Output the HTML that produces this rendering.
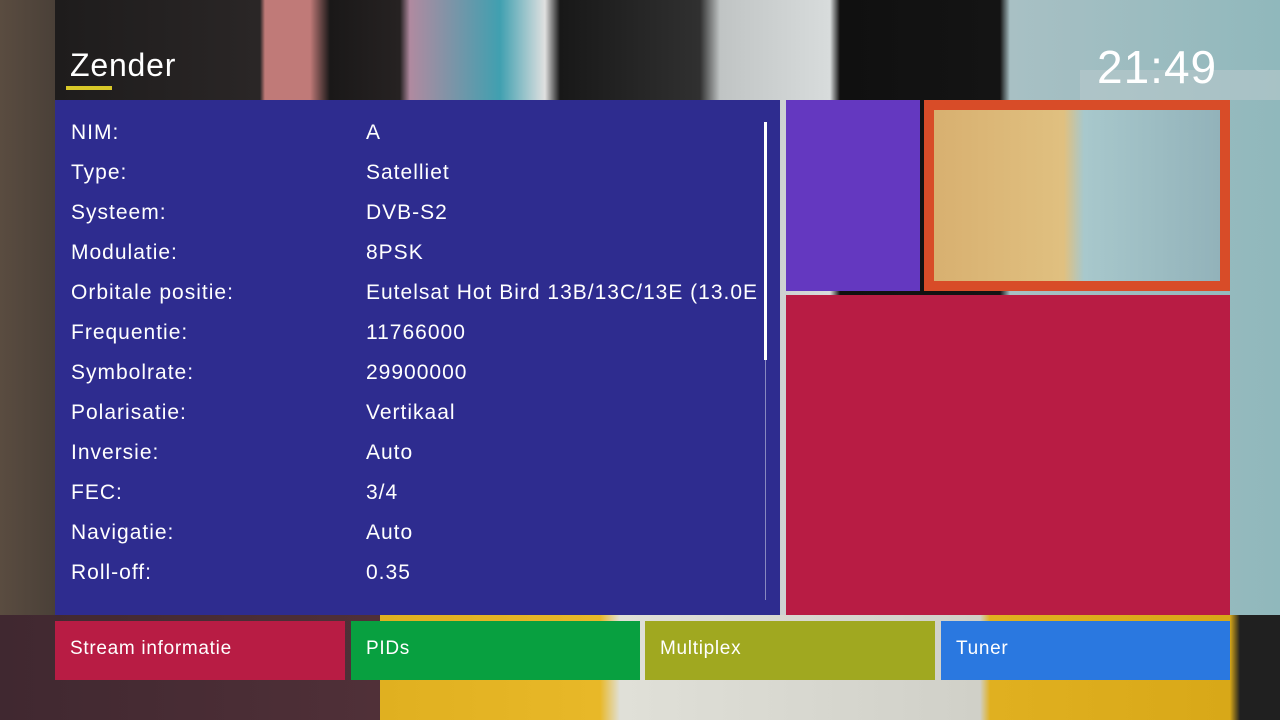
<!DOCTYPE html>
<html><head><style>
body{margin:0;width:1280px;height:720px;overflow:hidden;position:relative;font-family:"Liberation Sans",sans-serif;
background:linear-gradient(90deg,#5a4c40 0,#4a4038 55px,#1e1c1c 55px,#2a2626 260px,#c07a78 265px,#c07a78 310px,#1a1818 330px,#262222 400px,#b08aa0 410px,#40a0b0 500px,#e0e0e0 545px,#181818 560px,#303030 700px,#c0c4c4 720px,#d8dcdc 830px,#101010 840px,#141414 1000px,#a8c0c4 1010px,#90b8bc 1280px);}
.bot{position:absolute;left:0;top:615px;width:1280px;height:105px;background:linear-gradient(90deg,#402830 0,#503038 380px,#e0b020 380px,#e8b828 600px,#e0e0d8 620px,#d0d0c8 980px,#e0b020 990px,#d8a818 1230px,#202020 1240px);}
.t{position:absolute;color:#fff}
#panel{position:absolute;left:55px;top:100px;width:725px;height:515px;background:#2e2c8f}
.row{position:absolute;left:16px;font-size:21px;color:#fff;letter-spacing:1px}
.row span{position:absolute;left:295px;white-space:nowrap}
.btn{position:absolute;top:621px;height:59px;color:#fff;font-size:19px;line-height:55px;padding-left:15px;box-sizing:border-box;letter-spacing:0.7px}
</style></head><body>
<div class="bot"></div>
<div style="position:absolute;left:1080px;top:70px;width:200px;height:30px;background:#b8c8cc;opacity:.6"></div>
<div class="t" style="left:70px;top:47px;font-size:32px;letter-spacing:0.8px">Zender</div>
<div style="position:absolute;left:66px;top:86px;width:46px;height:4px;background:#d8c828"></div>
<div class="t" style="left:1097px;top:40px;font-size:46px;letter-spacing:1px">21:49</div>
<div id="panel">
<div class="row" style="top:21px">NIM:<span>A</span></div>
<div class="row" style="top:61px">Type:<span>Satelliet</span></div>
<div class="row" style="top:101px">Systeem:<span>DVB-S2</span></div>
<div class="row" style="top:141px">Modulatie:<span>8PSK</span></div>
<div class="row" style="top:181px">Orbitale positie:<span>Eutelsat Hot Bird 13B/13C/13E (13.0E</span></div>
<div class="row" style="top:221px">Frequentie:<span>11766000</span></div>
<div class="row" style="top:261px">Symbolrate:<span>29900000</span></div>
<div class="row" style="top:301px">Polarisatie:<span>Vertikaal</span></div>
<div class="row" style="top:341px">Inversie:<span>Auto</span></div>
<div class="row" style="top:381px">FEC:<span>3/4</span></div>
<div class="row" style="top:421px">Navigatie:<span>Auto</span></div>
<div class="row" style="top:461px">Roll-off:<span>0.35</span></div>
<div style="position:absolute;left:709px;top:22px;width:3px;height:238px;background:#fff"></div>
<div style="position:absolute;left:710px;top:260px;width:1px;height:240px;background:#8888c0"></div>
</div>
<div style="position:absolute;left:786px;top:100px;width:134px;height:191px;background:#6438c0"></div>
<div style="position:absolute;left:924px;top:100px;width:306px;height:191px;box-sizing:border-box;border:10px solid #d84c28;background:linear-gradient(90deg,#d8b070 0,#e0c080 130px,#a8c8cc 150px,#90b0b8 300px)"></div>
<div style="position:absolute;left:786px;top:295px;width:444px;height:320px;background:#b81c44"></div>
<div class="btn" style="left:55px;width:290px;background:#b81c44">Stream informatie</div>
<div class="btn" style="left:351px;width:289px;background:#08a040">PIDs</div>
<div class="btn" style="left:645px;width:290px;background:#a0a820">Multiplex</div>
<div class="btn" style="left:941px;width:289px;background:#2a78e0">Tuner</div>
</body></html>
